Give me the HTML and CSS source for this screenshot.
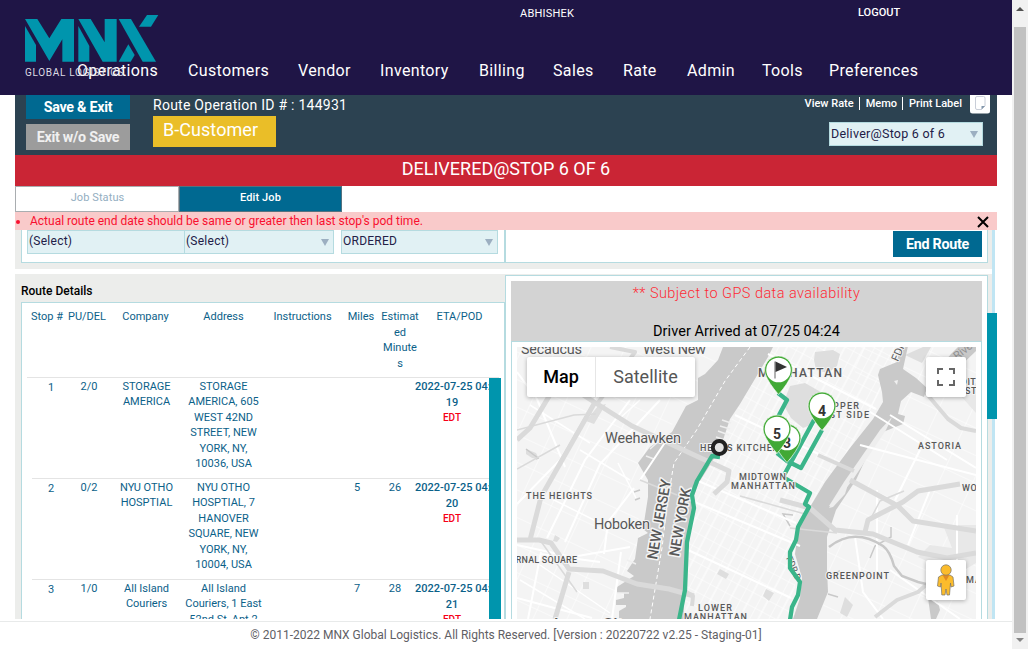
FILE: index.html
```html
<!DOCTYPE html>
<html lang="en">
<head>
<meta charset="utf-8">
<title>MNX Global Logistics</title>
<link rel="stylesheet" href="styles.css">
</head>
<body>
<div class="app">
  <div class="page">
    <header class="header">
      <div class="account"><span class="user">ABHISHEK</span><span class="logout">LOGOUT</span></div>
      <nav class="nav">
        <span>Operations</span><span>Customers</span><span>Vendor</span><span>Inventory</span><span>Billing</span><span>Sales</span><span>Rate</span><span>Admin</span><span>Tools</span><span>Preferences</span>
      </nav>
      <div class="logo">
        <svg width="134" height="48" viewBox="75 45 402 144" fill="#0095ad">
          <path d="M75 57h37l36 58 36-58h38v128h-35v-67l-39 65z"/>
          <path d="M75 78l33 57v50H75z"/>
          <path d="M235 57h37l42 70V57h36v128h-42z"/>
          <path d="M235 78l33 60v47h-33z"/>
          <path d="M356 57h37l75 128h-40z"/>
          <path d="M441 45h34l-22 35h-36z"/>
          <path d="M356 185l29-52 19 32-12 20z"/>
        </svg>
        <div class="logo-text">GLOBAL LOGISTICS</div>
      </div>
    </header>

    <main class="main">
      <section class="toolbar">
        <div class="actions">
          <button class="btn btn-save">Save &amp; Exit</button>
          <button class="btn btn-exit">Exit w/o Save</button>
        </div>
        <div class="route">
          <div class="route-id">Route Operation ID # : 144931</div>
          <div class="customer">B-Customer</div>
        </div>
        <div class="tools">
          <div class="links">
            <span>View Rate</span><i></i><span>Memo</span><i></i><span>Print Label</span>
            <svg class="note" width="20" height="22" viewBox="0 0 20 22"><rect width="20" height="21.500" rx="2.500" fill="#fff"/><path d="M7 4.500h6.500a1.500 1.500 0 0 1 1.500 1.500v8l-3.500 3.500H7A1.500 1.500 0 0 1 5.500 16V6A1.500 1.500 0 0 1 7 4.500z" fill="#fff" stroke="#c9ced8"/><path d="M15 14h-3.500v3.500z" fill="#8397ac"/></svg>
          </div>
          <div class="select select-status">Deliver@Stop 6 of 6</div>
        </div>
      </section>
      <div class="banner">DELIVERED@STOP 6 OF 6</div>
      <div class="tabs"><span class="tab">Job Status</span><span class="tab active">Edit Job</span></div>
      <div class="alert"><b class="dot"></b><span>Actual route end date should be same or greater then last stop's pod time.</span>
        <svg class="close" width="12" height="12" viewBox="0 0 12 12" stroke="#000" stroke-width="2"><path d="M1 1l10 10M11 1L1 11"/></svg>
      </div>

      <div class="scroll">
        <div class="panels">
          <section class="panel panel-status">
            <div class="fields">
              <div class="select plain">(Select)</div>
              <div class="select second">(Select)</div>
              <div class="select third">ORDERED</div>
            </div>
            <div class="finish"><button class="btn btn-end">End Route</button></div>
          </section>

          <section class="panel panel-route">
            <div class="details">
              <h2>Route Details</h2>
              <div class="table">
                <div class="thead">
                  <span>Stop #</span><span>PU/DEL</span><span>Company</span><span>Address</span><span>Instructions</span><span>Miles</span><span>Estimat<br>ed<br>Minute<br>s</span><span>ETA/POD</span>
                </div>
                <div class="tbody">
                  <div class="rows">
                    <div class="row"><span class="num">1</span><span>2/0</span><span>STORAGE<br>AMERICA</span><span>STORAGE<br>AMERICA, 605<br>WEST 42ND<br>STREET, NEW<br>YORK, NY,<br>10036, USA</span><span></span><span></span><span></span><span class="eta">2022-07-25 04:<br>19<br><em>EDT</em></span></div>
                    <div class="row"><span class="num">2</span><span>0/2</span><span>NYU OTHO<br>HOSPTIAL</span><span>NYU OTHO<br>HOSPTIAL, 7<br>HANOVER<br>SQUARE, NEW<br>YORK, NY,<br>10004, USA</span><span></span><span>5</span><span>26</span><span class="eta">2022-07-25 04:<br>20<br><em>EDT</em></span></div>
                    <div class="row"><span class="num">3</span><span>1/0</span><span>All Island<br>Couriers</span><span>All Island<br>Couriers, 1 East<br>52nd St, Apt 2</span><span></span><span>7</span><span>28</span><span class="eta">2022-07-25 04:<br>21<br><em>EDT</em></span></div>
                  </div>
                  <div class="grip"></div>
                </div>
              </div>
            </div>

            <div class="tracking">
              <div class="gps"><p class="gps-note">** Subject to GPS data availability</p><p class="arrived">Driver Arrived at 07/25 04:24</p></div>
              <div class="map-frame">
                <div class="map">
                  <svg class="map-art" viewBox="517 347 459 272" width="459" height="272">
                    <defs>
                      <pattern id="streets" width="17" height="13" patternUnits="userSpaceOnUse" patternTransform="rotate(28)"><path d="M0 0H17M0 0V13M8 0V13" stroke="#fff" fill="none"/></pattern>
                      <pattern id="blocks" width="31" height="25" patternUnits="userSpaceOnUse" patternTransform="rotate(25)"><path d="M0 0H31M0 0V25" stroke="#fff" stroke-width="1" fill="none"/></pattern>
                    </defs>
                    <path fill="#f4f4f4" d="M517 347h459v272H517z"/>
                    <path fill="url(#blocks)" d="M517 347h210l-60 85-30 50 5 80-22 57H517zM850 347h126v272H820l10-100 40-75z"/>
                    <path fill="url(#streets)" d="M767 347h135l-20 40-30 60-42 60-15 50v62H685l7-130 30-50z"/>
                    <g fill="#dedede">
                      <path d="M815 352l18-2 7 4-3 12-9 7-12-3-2-10z"/><path d="M790 386l15-3 21 12-3 25-20 8-12-10-8-14z"/>
                      <path d="M526 449l10 4 3 6-7-1-6-4zM555 535l5 3-3 4-4-1zM583 582h6v7h-6zM675 575h8v8h-8zM720 569l9 5-3 5-9-5zM845 597l8 8-6 12-7-4zM766 589l8 4-5 8-6-5z"/>
                      <path d="M598 406l8-2-12 20-8-3zM905 355l18-8h8l-9 16z"/>
                    </g>
                    <path fill="#e8e8e8" d="M943 525h33v38l-20 12-38-18 12-12 22 3zM960 395l16 18v-30z"/>
                    <g fill="#c9c9c9">
                      <path d="M723 347l-5 13-13 14-7 4v22l-12 6-14 26-22 15-12 16 10 17 0 17-5 32 5 4-10 5-3 21-8 12 7 5-17 11v6h7v5l-8 2v5h10v2l-7 4v10h65l0-39 5-40 4-43 5-15 22-35 10-30 10-15 28-47 12-24z"/>
                      <path d="M900 347l-3 15-17 7-2 6 4 17 1 10-10 17-23 29-25 34-15 25-12 23-3 24 7 24-2 20-7 21h24l11-27-1-23v-32l9-27 20-30 17-37 10-11 20-8 2-8-7-2 3-13 10-9 13 5 3-9-11-10-13-9 5-23z"/>
                      <path d="M937 371l14-17 7-7h18v4l-23 22z"/>
                      <path d="M928 598l10 4 2 8-4 9h-5z"/>
                    </g>
                    <path d="M892 417l-12 13-36 52-15 24 3 1 22-29 32-48z" fill="#eee"/>
                    <path d="M849 481l-9 11-11 16 4-1 12-13z" fill="#eee"/>
                    <path d="M894 381l4-1-1 5z" fill="#f0f0f0"/>
                    <path d="M722 420l9 3M720 426l10 3M718 431l11 4M716 437l9 3M713 442l8 3M650 449l8-7M646 456l8 3M627 560l9 4M617 593h12" stroke="#efefef" stroke-width="1.500" fill="none"/>
                    <g stroke="#c9c9c9" stroke-width="1.500" fill="none">
                      <path d="M640 490l-6 2M640 498l-5 2M550 398l5-14-3-10M526 449l12 9-2 1"/>
                      <path d="M820 577l20-6M828 594l10 3M790 526l-7-12 10 1M870 558l5-12 16-9 0-10"/>
                    </g>
                    <g stroke="#fff" fill="none">
                      <path stroke-width="2" d="M517 372l20 27 28 68M600 390l-40 70-43 44M630 400l-45 60-38 78M660 400l-60 64-35 78M670 435l-30 45M517 545l55 12 58-10M528 619l13-67M612 619l9-67M517 598l75 20M540 554l60 8M634 488l-26 34-4 32"/>
                      <path stroke-width="1.500" d="M530 405l60 38M550 498l60 30M580 450l50 30M520 580l65 39M540 565l70 48M640 400l-22 20M618 463l18 35"/>
                      <path stroke-width="2" d="M690 500l110 46M688 550l103 48M696 480l100 43M768 354l108 55M735 415l90 42M860 445l116 30M890 415l86 53M867 410l80 50M855 537l8 55 20 27M877 490l0 90M930 490l-22 55M957 515v47M890 570l70 49M920 450l-25 50"/>
                      <path stroke-width="1" stroke-dasharray="4 3" d="M750 347l-25 34-29 50-22 32-6 35-6 50-12 71"/>
                    </g>
                    <g fill="none" stroke="#dadada" stroke-linejoin="round">
                      <path stroke-width="5" d="M566 368l-36 60-13 12M595 402l-54 95-11 43M517 540h22l12 3 18 26 34 2 34 13 32 5 25 7M569 572l-14 47"/>
                      <path stroke-width="5" d="M580 393l52 33 60 28 37 17-2 11-13 12"/>
                      <path stroke-width="4" d="M610 347l25 5-38 52M818 455l20 9 16 7M683 590l10 6-1 10"/>
                      <path stroke-width="5" d="M780 500l30 8 25 22 38 4 44 18 30 6 29-5M850 480l48 26 15 15 63 10M865 532l3-12 35-18 15-11 42-7"/>
                      <path stroke-width="4" d="M875 617l22-17 21-8 25-22M926 393l22 26 13 9 15 3"/>
                      <path stroke-width="1.500" d="M790 528l47 5M740 496l65 18M517 430l57-15 22-1M560 445l-43 24M540 540l37 52M640 480l37 15M870 520l10-19 24-10"/>
                    </g>
                    <path d="M829 547q25-20 54-1 7 5 11 20l8 10 16 6 12 3" fill="none" stroke="#c8c8c8" stroke-width="2.500"/>

                    <g class="label fdr"><text transform="translate(898 362) rotate(-67)">FDR</text><text class="lower" transform="translate(786 558) rotate(67)">FDR D</text><text class="river" transform="translate(957 360) rotate(-38)">River</text></g>
                    <g class="label state">
                      <text transform="translate(657 560) rotate(-80)" textLength="81">NEW JERSEY</text><text transform="translate(679 557) rotate(-80)" textLength="69">NEW YORK</text>
                    </g>

                    <g class="route-line">
                      <path d="M720 457l-8-1-15 25-5 14 2 13-7 34-2 48-6 30"/>
                      <path d="M778 393l9 7-9 17M814 420l-31 57 27 16-5 11 4 3-11 20-2 13-6 12v16l10 14-2 13-6 12-2 13M777 453l10 8 14 7 21-38"/>
                    </g>

                    <g class="label town">
                      <text x="521" y="353.500" textLength="61">Secaucus</text><text x="643" y="353.500" textLength="63">West New</text>
                      <text x="605" y="443" textLength="76">Weehawken</text><text x="594" y="528.500" textLength="56">Hoboken</text>
                      <text class="city" x="549" y="630" textLength="82">Jersey City</text>
                    </g>
                    <g class="label area">
                      <text x="758" y="377" class="borough" textLength="84">MANHATTAN</text>
                      <text x="826" y="408.500" textLength="33">UPPER</text><text x="816" y="417.500" textLength="53">EAST SIDE</text>
                      <text x="918" y="448.500" textLength="43">ASTORIA</text>
                      <text x="700" y="451" textLength="79">HELL'S KITCHEN</text>
                      <text x="739" y="480" textLength="47">MIDTOWN</text><text x="731" y="489" textLength="64">MANHATTAN</text>
                      <text x="526" y="499" textLength="66">THE HEIGHTS</text><text x="498" y="563" textLength="79">JOURNAL SQUARE</text>
                      <text x="826" y="579" textLength="63">GREENPOINT</text><text x="698" y="611" textLength="34">LOWER</text><text x="684" y="620" textLength="63">MANHATTAN</text>
                      <text x="962" y="491" textLength="50">WOODSIDE</text><text x="966" y="583" textLength="48">MASPETH</text>
                      <text x="961" y="385" textLength="42">DITMARS</text><text x="965" y="394" textLength="48">STEINWAY</text>
                    </g>

                    <circle cx="719.300" cy="447.500" r="6.500" fill="#e4e4e4" stroke="#222" stroke-width="4"/>

                    <g class="pin" transform="translate(787 438)"><path class="halo" d="M-13.300 4A13.900 13.900 0 1 1 13.300 4Q10 13 0 24.500Q-10 13-13.300 4z"/><circle r="12.300"/><text y="10">3</text></g>
                    <g class="pin" transform="translate(777 429)"><path class="halo" d="M-13.300 4A13.900 13.900 0 1 1 13.300 4Q10 13 0 24.500Q-10 13-13.300 4z"/><circle r="12.300"/><text y="10">5</text></g>
                    <g class="pin" transform="translate(822 406)"><path class="halo" d="M-13.300 4A13.900 13.900 0 1 1 13.300 4Q10 13 0 24.500Q-10 13-13.300 4z"/><circle r="12.300"/><text y="10">4</text></g>
                    <g class="pin" transform="translate(778.500 370)"><path class="halo" d="M-13.300 4A13.900 13.900 0 1 1 13.300 4Q10 13 0 24.500Q-10 13-13.300 4z"/><circle r="12.300"/><path d="M-3.500-8.500V8.500" stroke="#888" stroke-width="1.300"/><path d="M-3-8.500L8.500-3-3 2z" fill="#333"/></g>
                  </svg>
                  <div class="map-type"><span class="on">Map</span><span>Satellite</span></div>
                  <div class="map-btn fullscreen"><svg width="18" height="18" viewBox="0 0 18 18" fill="none" stroke="#666" stroke-width="2"><path d="M1 6V1h5M12 1h5v5M17 12v5h-5M6 17H1v-5"/></svg></div>
                  <div class="map-btn pegman"><svg width="20" height="32" viewBox="0 0 20 32" stroke="#77726a" stroke-width=".7"><path d="M6 11h8l3 2 1 9-3 1-.5-4-1 12H11l-1-6-1 6H5.800L5 19l-.5 4-3-1 1-9z" fill="#fbbc2c"/><path d="M6.500 11h7L10 17z" fill="#e08a23" stroke="none"/><circle cx="10" cy="6" r="5.200" fill="#fbbc2c"/></svg></div>
                </div>
              </div>
            </div>
          </section>
        </div>
        <div class="rail"></div>
        <div class="rail-thumb"></div>
      </div>
    </main>
    <footer class="footer"><span>© 2011-2022 MNX Global Logistics. All Rights Reserved. [Version : 20220722 v2.25 - Staging-01]</span></footer>
  </div>
  <div class="scrollbar"><i class="up"></i><div class="bar"></div><i class="down"></i></div>
</div>
</body>
</html>
```
FILE: styles.css
```css
* { box-sizing: border-box; }
body { margin: 0; background: #fff; font-family: Roboto, "Liberation Sans", sans-serif; font-size: 12px; color: #1f1546; }
p, h2 { margin: 0; }
.app { display: flex; width: 1028px; height: 649px; overflow: hidden; }
.page { width: 1012px; display: flex; flex-direction: column; }

.header { position: relative; height: 95px; background: #1f1546; color: #fff; flex: none; }
.account { display: flex; height: 26px; padding-left: 520px; line-height: 27px; }
.user { width: 338px; font-size: 11px; letter-spacing: .2px; }
.logout { font-size: 11px; font-weight: 500; line-height: 25px; }
.nav { display: grid; grid-template-columns: 81px 80px 52px 69px 44px 40px 34px 45px 37px 91px; column-gap: 30px; padding: 34px 0 0 77px; font-size: 16px; line-height: 22px; letter-spacing: .35px; white-space: nowrap; }
.logo { position: absolute; left: 25px; top: 15px; }
.logo svg { display: block; }
.logo-text { font-size: 10px; line-height: 12px; letter-spacing: .7px; margin-top: 4px; color: #dddbe3; white-space: nowrap; }

.main { width: 982px; height: 524px; margin-left: 15px; overflow: hidden; flex: none; }
.toolbar { display: flex; height: 60px; padding-left: 11px; background: #2c4251; color: #fff; }
.btn { display: block; border: 0; padding: 0; margin: 0; width: 104px; height: 26px; font: 700 14.3px/25px Roboto, sans-serif; letter-spacing: -.28px; color: #fff; text-align: center; }
.btn-save { background: #006991; height: 24px; line-height: 21px; }
.btn-exit { background: #9c9c9c; margin-top: 5px; color: #f0f0f0; }
.btn-end { background: #006991; width: 89px; }
.route { margin-left: 23px; width: 600px; }
.route-id { height: 21px; line-height: 21px; font-size: 14px; letter-spacing: .26px; }
.customer { width: 123px; height: 31px; padding-left: 10px; background: #eabe28; font-size: 18px; line-height: 28px; letter-spacing: .05px; }
.tools { width: 244px; }
.links { display: flex; justify-content: flex-end; align-items: center; height: 18px; margin-top: -1px; padding-right: 7px; font-size: 11px; font-weight: 500; }
.links i { width: 1px; height: 13px; background: #fff; margin: 0 6px 0 5px; }
.note { margin-left: 8px; }
.select { position: relative; height: 24px; border: 1px solid #b5dbe0; background: #e1f1f4; padding-left: 1px; font-size: 12px; line-height: 21px; letter-spacing: .25px; color: #222047; }
.select::after { content: ""; position: absolute; right: 4px; top: 8px; border: 4px solid transparent; border-top: 7px solid #9cafc1; border-bottom: 0; }
.select.plain::after { display: none; }
.select-status { width: 154px; margin: 10px 0 0 76px; font-size: 12.5px; }
.banner { height: 31px; background: #ca2535; color: #fff; text-align: center; font-size: 18px; line-height: 28px; letter-spacing: 0; }
.tabs { display: flex; height: 26px; }
.tab { width: 164px; border: 1px solid #a9adb0; text-align: center; font-size: 11px; line-height: 22px; color: #93aec1; letter-spacing: .1px; }
.tab:first-child { padding-left: 1px; }
.tab.active { width: 163px; background: #006991; border-color: #54727f; color: #fff; font-weight: 500; }
.alert { display: flex; align-items: center; height: 18px; background: #f9caca; color: #f8102f; font-size: 12px; }
.dot { width: 4px; height: 4px; border-radius: 50%; background: #f8102f; margin: 2px 10px 0 1px; }
.close { margin: 2px 8px 0 auto; }

.scroll { position: relative; display: flex; height: 389px; }
.panels { width: 977px; }
.rail { width: 3px; background: #c0e5f3; }
.rail-thumb { position: absolute; left: 972px; top: 83px; width: 12px; height: 106px; background: #0095ad; }
.panel { display: flex; background: #ecedeb; }
.panel-status { height: 39px; padding: 0 4px 6px 6px; }
.fields { display: flex; width: 484px; padding-left: 5px; background: #fff; border: solid #b5dbe0; border-width: 0 1px 1px; }
.fields .plain { width: 158px; }
.fields .second { width: 149px; border-left: 0; }
.fields .third { width: 157px; margin-left: 7px; }
.finish { flex: 1; display: flex; justify-content: flex-end; padding: 1px 5px 0 0; background: #fff; border: solid #b5dbe0; border-width: 0 1px 1px; }
.panel-route { height: 345px; margin-top: 5px; padding: 0 4px 0 6px; }
.details { width: 484px; }
.details h2 { height: 28px; font-size: 12px; line-height: 34px; font-weight: 500; color: #000; }
.table { height: 317px; padding: 6px 3px 0 5px; background: #fff; border: solid #b5dbe0; border-width: 1px 1px 0; overflow: hidden; color: #0b6189; font-size: 11px; line-height: 15.6px; text-align: center; }
.thead { display: grid; grid-template-columns: 40px 40px 77px 79px 79px 38px 40px 79px; height: 69px; width: 472px; border-bottom: 1px solid #e4e4e4; }
.thead span, .row span { white-space: nowrap; }
.tbody { display: flex; padding-left: 5px; }
.rows { width: 457px; overflow: hidden; }
.row { display: grid; grid-template-columns: 38px 38px 77px 77px 76px 38px 38px 75px; height: 101px; padding-top: .5px; border-bottom: 1px solid #e4e4e4; }
.row .num { padding-top: 1px; }
.row .eta { display: block; padding: .6px 0 0 1px; font-weight: 500; letter-spacing: 0; }
.eta em { font-style: normal; color: #f60018; font-size: 10px; }
.grip { width: 12px; background: #0095ad; height: 260px; flex: none; }

.tracking { flex: 1; padding: 5px 5px 0; margin-top: 1px; background: #fff; border: 1px solid #b5dbe0; border-bottom: 0; }
.gps { height: 60px; background: #d3d3d3; text-align: center; font-size: 14.5px; }
.gps-note { color: #ff2a35; line-height: 25px; letter-spacing: .45px; font-weight: 300; }
.arrived { color: #000; line-height: 24px; margin-top: 14px; letter-spacing: .08px; }
.map-frame { border: 1px solid #b5dbe0; border-bottom: 0; padding: 5px 5px 0; }
.map { position: relative; width: 459px; height: 272px; overflow: hidden; }
.map-art { display: block; }
.map-type { position: absolute; left: 10px; top: 10px; display: flex; width: 168px; height: 40px; background: #fff; border-radius: 2px; box-shadow: 0 1px 4px rgba(0,0,0,.3); font-size: 18px; line-height: 40px; text-align: center; color: #565656; }
.map-type span { flex: 1; }
.map-type .on { flex: none; width: 69px; color: #000; font-weight: 500; border-right: 1px solid #e6e6e6; }
.map-btn { position: absolute; left: 409px; width: 40px; height: 40px; background: #fff; border-radius: 2px; box-shadow: 0 1px 4px rgba(0,0,0,.3); display: flex; align-items: center; justify-content: center; }
.fullscreen { top: 10px; }
.pegman { top: 213px; }
.route-line { fill: none; stroke: #3bb58a; stroke-width: 4.3; stroke-linejoin: round; }
.label { fill: #585858; stroke: #f4f4f4; stroke-width: 2; paint-order: stroke; stroke-linejoin: round; }
.town { font-size: 14.5px; }
.city { font-size: 17px; font-weight: 500; }
.area { font-size: 9px; font-weight: 500; }
.borough { font-size: 12px; }
.state { font-size: 14.5px; font-weight: 500; stroke-width: 3; }
.fdr { font-size: 11px; }
.lower { font-size: 9px; }
.river { fill: #929292; stroke: none; }
.pin .halo { fill: #41a935; stroke: #fff; stroke-width: .6; }
.pin circle { fill: #fff; }
.pin text { font-size: 14px; font-weight: 700; fill: #333; text-anchor: middle; }

.footer { height: 28px; margin-top: 2px; border-top: 1px solid #e8eaea; text-align: center; line-height: 26px; font-size: 12px; color: #5f6065; letter-spacing: 0; }
.scrollbar { width: 16px; background: #f1f1f1; display: flex; flex-direction: column; align-items: center; }
.scrollbar i { border: 4px solid transparent; }
.up { border-bottom-color: #505050 !important; border-top: 0 !important; margin: 7px 0 16px; }
.down { border-top-color: #858585 !important; border-bottom: 0 !important; margin-top: 5px; }
.bar { width: 12px; height: 606px; background: #c1c1c1; }
```
